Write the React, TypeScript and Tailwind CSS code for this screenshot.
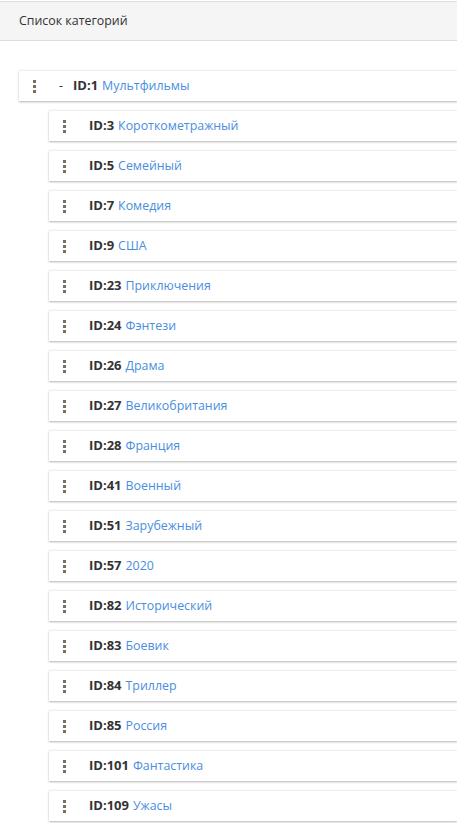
const items = [
  { id: 3, name: 'Короткометражный' },
  { id: 5, name: 'Семейный' },
  { id: 7, name: 'Комедия' },
  { id: 9, name: 'США' },
  { id: 23, name: 'Приключения' },
  { id: 24, name: 'Фэнтези' },
  { id: 26, name: 'Драма' },
  { id: 27, name: 'Великобритания' },
  { id: 28, name: 'Франция' },
  { id: 41, name: 'Военный' },
  { id: 51, name: 'Зарубежный' },
  { id: 57, name: '2020' },
  { id: 82, name: 'Исторический' },
  { id: 83, name: 'Боевик' },
  { id: 84, name: 'Триллер' },
  { id: 85, name: 'Россия' },
  { id: 101, name: 'Фантастика' },
  { id: 109, name: 'Ужасы' },
];

function Handle() {
  return (
    <div className="flex flex-col gap-[2px] pt-px">
      <span className="block h-[3px] w-[3px] bg-[#7b705f]" />
      <span className="block h-[3px] w-[3px] bg-[#7b705f]" />
      <span className="block h-[3px] w-[3px] bg-[#7b705f]" />
    </div>
  );
}

function Row({ id, name, root }: { id: number; name: string; root?: boolean }) {
  return (
    <div className="flex h-[31px] items-center border-t border-[#f0f0f0] bg-white pl-[14px] shadow-[0_1px_2px_rgba(0,0,0,0.3)]">
      <Handle />
      {root ? (
        <span className="ml-[23px] w-[14px] text-[#333]">-</span>
      ) : (
        <span className="w-[23px]" />
      )}
      <span className="text-[13px] font-bold text-[#333]">ID:{id}</span>
      <span className="ml-1 text-[#4a8ee0]">{name}</span>
    </div>
  );
}

export default function App() {
  return (
    <div
      className="min-h-screen overflow-hidden bg-white text-[12.4px]"
      style={{ fontFamily: '"Open Sans", "Noto Sans", sans-serif' }}
    >
      <div className="mt-px flex h-[40px] items-center border-y border-[#dedede] bg-[#f5f5f5] px-[19px] text-[#333]">
        Список категорий
      </div>
      <div className="flex flex-col gap-[9px] pt-[29px]">
        <div className="ml-[19px]">
          <Row id={1} name="Мультфильмы" root />
        </div>
        {items.map((it) => (
          <div key={it.id} className="ml-[49px]">
            <Row id={it.id} name={it.name} />
          </div>
        ))}
      </div>
    </div>
  );
}
